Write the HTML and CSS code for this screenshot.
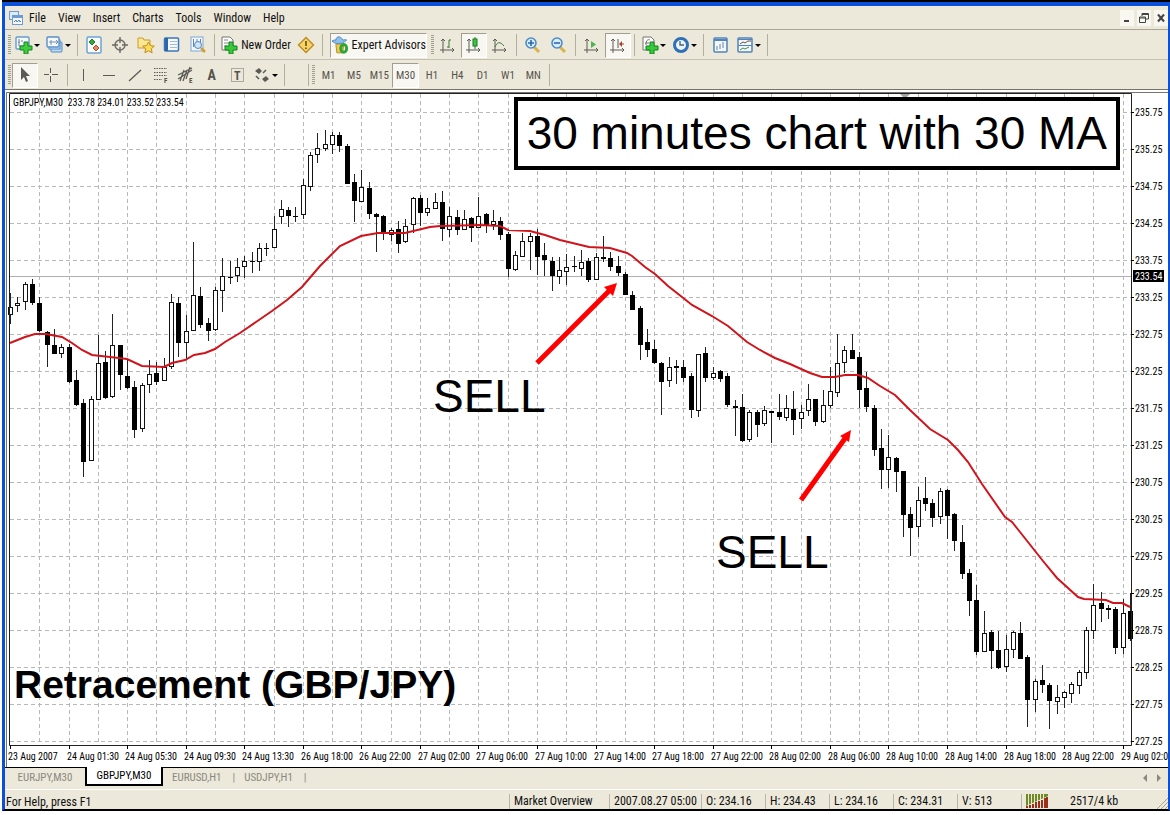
FILE: index.html
```
<!DOCTYPE html>
<html lang="en">
<head>
  <meta charset="UTF-8">
  <meta name="viewport" content="width=device-width, initial-scale=1.0">
  <title>GBPJPY,M30</title>
  <link rel="stylesheet" href="styles.css">
</head>
<body>
  <div class="window">
    <div class="titlebar"></div>

    <nav class="menu">
      <svg class="app-icon" width="14" height="14" viewBox="0 0 14 14">
        <rect x=".5" y=".5" width="9" height="8" fill="#dcebfa" stroke="#6f9bd0"/>
        <rect x="3.500" y="4.500" width="10" height="9" fill="#f4f9ff" stroke="#6f9bd0"/>
        <path d="M4 6h9" stroke="#6f9bd0" stroke-width="2"/>
        <path d="M5 11l2-2 1 2 2-2 1 2 1-1" fill="none" stroke="#4b7fc0"/>
      </svg>
      <button>File</button>
      <button>View</button>
      <button>Insert</button>
      <button>Charts</button>
      <button>Tools</button>
      <button>Window</button>
      <button>Help</button>
      <div class="window-buttons">
        <button aria-label="Minimize"><svg width="12" height="12" viewBox="0 0 12 12"><path d="M3 9h5" stroke="#444" stroke-width="2"/></svg></button>
        <button aria-label="Restore"><svg width="12" height="12" viewBox="0 0 12 12"><path d="M4 4V1.500h6.500V7H8M4 2.500h6M1.500 5h6v5.500h-6zM1.500 6h6" fill="none" stroke="#444"/></svg></button>
        <button aria-label="Close"><svg width="12" height="12" viewBox="0 0 12 12"><path d="M3 2.500l6 7M9 2.500l-6 7" stroke="#444" stroke-width="2"/></svg></button>
      </div>
    </nav>

    <div class="toolbar">
      <span class="grip"></span>
      <button class="tool split" aria-label="New chart">
        <svg width="18" height="18" viewBox="0 0 18 18"><rect x="1" y="1" width="13" height="12" rx="1" fill="#f3f9ff" stroke="#6a9ccc" stroke-width="1.400"/><path d="M4 3v7h8M3 6h2M7 4v2" stroke="#6a86a4" fill="none"/><path d="M9 6h4v4h4v4h-4v4H9v-4H5v-4h4z" fill="#3fce3f" stroke="#17811d"/></svg>
        <i class="arrow"></i>
      </button>
      <button class="tool split" aria-label="Profiles">
        <svg width="18" height="18" viewBox="0 0 18 18"><rect x="5" y="6" width="11" height="10" rx="1" fill="#bfdaf3" stroke="#4f8ac6"/><rect x="3" y="4" width="11" height="9" fill="#d8eafa" stroke="#4f8ac6"/><rect x="1" y="1" width="12" height="10" rx="1" fill="#f3f9ff" stroke="#5a90c8" stroke-width="1.400"/><path d="M3 6h9M5 4v5M10 4l2 2-2 2" stroke="#7590ac" fill="none"/></svg>
        <i class="arrow"></i>
      </button>
      <span class="sep"></span>
      <button class="tool" aria-label="Market watch"><svg width="18" height="18" viewBox="0 0 18 18"><rect x="2" y="1" width="14" height="16" rx="1.500" fill="#fbfdff" stroke="#6ba3d6" stroke-width="1.500"/><path d="M7 3l3 3-3 3-3-3z" fill="#36a83c" stroke="#247a2a"/><path d="M11 9l3 3-3 3-3-3z" fill="#e58a5c" stroke="#b8522c"/></svg></button>
      <button class="tool" aria-label="Data window"><svg width="18" height="18" viewBox="0 0 18 18" fill="none" stroke="#6b6a66" stroke-width="1.400"><circle cx="9" cy="9" r="5"/><path d="M9 1v6M9 11v6M1 9h6M11 9h6"/></svg></button>
      <button class="tool" aria-label="Navigator"><svg width="18" height="18" viewBox="0 0 18 18"><path d="M1 2h5l1 2h6v8H1z" fill="#fbe694" stroke="#c99b2e"/><path d="M11.500 6l1.800 3.600 4 .5-3 2.700.8 4-3.600-2-3.600 2 .8-4-3-2.700 4-.5z" fill="#fbdc57" stroke="#c28c1c"/></svg></button>
      <button class="tool" aria-label="Terminal"><svg width="18" height="18" viewBox="0 0 18 18"><rect x="1.500" y="2" width="14" height="13" rx="1" fill="#f6faff" stroke="#3b76bd" stroke-width="1.500"/><path d="M3.500 2v13" stroke="#2b66ae" stroke-width="3"/><path d="M7 5.500h7M7 8.500h7M7 11.500h7" stroke="#a3bad4"/></svg></button>
      <button class="tool" aria-label="Strategy tester"><svg width="18" height="18" viewBox="0 0 18 18"><rect x="2" y="1" width="12" height="14" fill="#f1f7fd" stroke="#7ea8d3"/><path d="M4.500 3v8M8 3v4M11.500 3v5" stroke="#5d85b6"/><circle cx="9" cy="9" r="3.500" fill="#cfe5f8" stroke="#5789bd"/><path d="M12 12l4 4" stroke="#cf9f35" stroke-width="2.500"/></svg></button>
      <span class="sep"></span>
      <button class="tool order">
        <svg width="18" height="18" viewBox="0 0 18 18"><path d="M2 1h8l3 3v10H2z" fill="#fff" stroke="#77756f"/><path d="M4 4h4M4 7h6M4 10h3" stroke="#8b8984"/><path d="M9 6h4v4h4v4h-4v4H9v-4H5v-4h4z" fill="#36ca3b" stroke="#158020"/></svg>
        New Order
      </button>
      <button class="tool" aria-label="MetaEditor"><svg width="18" height="18" viewBox="0 0 18 18"><path d="M9 1.500L16.500 9 9 16.500 1.500 9z" fill="#f6d568" stroke="#bd8c23" stroke-width="1.400"/><path d="M9 5v5M9 11.500v1.500" stroke="#6b4d13" stroke-width="1.600"/></svg></button>
      <span class="sep"></span>
      <button class="tool expert pressed">
        <svg width="18" height="18" viewBox="0 0 18 18"><path d="M5 8h8l-1 9H6z" fill="#f2c950" stroke="#b88b25"/><path d="M1 5c3 3 10 4 15-1-2-1-3 0-4 0C10-1 5 0 5 4 3 4 2 4 1 5z" fill="#8dc0ee" stroke="#4c86c3"/><ellipse cx="13" cy="12.500" rx="3" ry="4" fill="none" stroke="#2da635" stroke-width="3"/></svg>
        Expert Advisors
      </button>
      <span class="grip"></span>
      <button class="tool" aria-label="Bar chart"><svg class="axes" width="18" height="18" viewBox="0 0 18 18"><path d="M4 3v14M1 14h14M2 5l2-2 2 2M13 12l2 2-2 2"/><path d="M10 4v8M12 4h-2M8 11h2" stroke="#397a3d"/></svg></button>
      <button class="tool pressed" aria-label="Candlesticks"><svg class="axes" width="18" height="18" viewBox="0 0 18 18"><path d="M4 3v14M1 14h14M2 5l2-2 2 2M13 12l2 2-2 2"/><path d="M10 1v12" stroke="#23742a"/><rect x="8" y="3" width="4" height="7" fill="#38c647" stroke="#23742a"/></svg></button>
      <button class="tool" aria-label="Line chart"><svg class="axes" width="18" height="18" viewBox="0 0 18 18"><path d="M4 3v14M1 14h14M2 5l2-2 2 2M13 12l2 2-2 2"/><path d="M4 11c2-5 5-6 9-1" stroke="#397a3d"/></svg></button>
      <span class="sep"></span>
      <button class="tool" aria-label="Zoom in"><svg width="18" height="18" viewBox="0 0 18 18"><path d="M10 11l5 5" stroke="#d8b24b" stroke-width="3"/><circle cx="7" cy="7" r="5" fill="#d8ecfc" stroke="#4c8cca" stroke-width="1.600"/><path d="M4 7h6M7 4v6" stroke="#2c68ae" stroke-width="1.600"/></svg></button>
      <button class="tool" aria-label="Zoom out"><svg width="18" height="18" viewBox="0 0 18 18"><path d="M10 11l5 5" stroke="#d8b24b" stroke-width="3"/><circle cx="7" cy="7" r="5" fill="#d8ecfc" stroke="#4c8cca" stroke-width="1.600"/><path d="M4 7h6" stroke="#2c68ae" stroke-width="1.600"/></svg></button>
      <span class="sep"></span>
      <button class="tool" aria-label="Auto scroll"><svg class="axes" width="18" height="18" viewBox="0 0 18 18"><path d="M4 3v14M1 14h14M2 5l2-2 2 2M13 12l2 2-2 2"/><path d="M8 5l5 3.500L8 12z" fill="#48b651" stroke="none"/></svg></button>
      <button class="tool pressed" aria-label="Chart shift"><svg class="axes" width="18" height="18" viewBox="0 0 18 18"><path d="M4 3v14M1 14h14M2 5l2-2 2 2M13 12l2 2-2 2M9 3v9"/><path d="M15 8h-3" stroke="#a8402f"/><path d="M13 5v6l-3-3z" fill="#a8402f" stroke="none"/></svg></button>
      <span class="sep"></span>
      <button class="tool split" aria-label="Indicators">
        <svg width="18" height="18" viewBox="0 0 18 18"><path d="M2 1h8l3 3v10H2z" fill="#fff" stroke="#77756f"/><path d="M5 9c0-5 2-6 4-5M4 7h4" fill="none" stroke="#77756f"/><path d="M9 6h4v4h4v4h-4v4H9v-4H5v-4h4z" fill="#36ca3b" stroke="#158020"/></svg>
        <i class="arrow"></i>
      </button>
      <button class="tool split" aria-label="Periods">
        <svg width="18" height="18" viewBox="0 0 18 18"><circle cx="9" cy="9" r="6.500" fill="#e9f4fd" stroke="#2f6fb6" stroke-width="3"/><path d="M8 5v4h4" fill="none" stroke="#4a5f78" stroke-width="1.300"/></svg>
        <i class="arrow"></i>
      </button>
      <span class="sep"></span>
      <button class="tool" aria-label="Tile windows"><svg width="18" height="18" viewBox="0 0 18 18"><rect x="3" y="2" width="13" height="14" rx="1" fill="#f1f7fd" stroke="#5084b8" stroke-width="1.500"/><path d="M3 4h13" stroke="#5084b8" stroke-width="2"/><path d="M6 10v4M9 8v5M12 6v6" stroke="#6b83a0"/></svg></button>
      <button class="tool split" aria-label="Templates">
        <svg width="18" height="18" viewBox="0 0 18 18"><rect x="2" y="2" width="14" height="14" rx="1" fill="#f1f7fd" stroke="#5084b8" stroke-width="1.500"/><path d="M2 3.500h14M2 9.500h14" stroke="#5084b8"/><path d="M4 8l3-2 2 1 3-2h3" fill="none" stroke="#7a4d38"/><path d="M4 14l3-2 2 1 4-2" fill="none" stroke="#4a8a50"/></svg>
        <i class="arrow"></i>
      </button>
      <span class="sep"></span>
    </div>

    <div class="toolbar drawing">
      <span class="grip"></span>
      <button class="tool pressed" aria-label="Cursor"><svg width="18" height="18" viewBox="0 0 18 18"><path d="M5 1v13l3-3 2 5 2-1-2-5h4z" fill="#5b5a56"/></svg></button>
      <button class="tool" aria-label="Crosshair"><svg width="18" height="18" viewBox="0 0 18 18"><path d="M8.500 2v5M8.500 10v6M2 8.500h5M10 8.500h6" stroke="#5b5a56"/></svg></button>
      <span class="sep"></span>
      <div class="lines">
        <button class="tool" aria-label="Vertical line"><svg width="18" height="18" viewBox="0 0 18 18"><path d="M8.500 3v12" stroke="#5b5a56"/></svg></button>
        <button class="tool" aria-label="Horizontal line"><svg width="18" height="18" viewBox="0 0 18 18"><path d="M3 9.500h12" stroke="#5b5a56"/></svg></button>
        <button class="tool" aria-label="Trendline"><svg width="18" height="18" viewBox="0 0 18 18"><path d="M3 15L15 4" stroke="#5b5a56" stroke-width="1.300"/></svg></button>
        <button class="tool" aria-label="Fibonacci retracement"><svg width="18" height="20" viewBox="0 0 18 20"><path d="M2 3.500h13M2 7.500h13M2 10.500h13M2 14.500h8" stroke="#5b5a56" stroke-dasharray="1.500 1"/><text x="12" y="18" class="icon-letter">F</text></svg></button>
        <button class="tool" aria-label="Equidistant channel"><svg width="18" height="20" viewBox="0 0 18 20"><path d="M1 14L15 5M1 10L15 3M3 16L7 5M6 16l4-11M9 14l4-12" stroke="#5b5a56" stroke-width="1.300"/><text x="12" y="18" class="icon-letter">E</text></svg></button>
        <button class="tool letter">A</button>
        <button class="tool" aria-label="Text label"><svg width="18" height="18" viewBox="0 0 18 18"><rect x="3.500" y="2.500" width="12" height="13" fill="none" stroke="#6b6a66" stroke-dasharray="1 1"/><text x="6" y="14" class="icon-big">T</text></svg></button>
      </div>
      <button class="tool split" aria-label="Arrows">
        <svg width="18" height="18" viewBox="0 0 18 18"><path d="M6 2l3 3-3 3-4-3zM13 10l3 3-4 3-3-3z" fill="#5b5a56"/><path d="M3 10l3 3M10 7l3-3" stroke="#5b5a56" stroke-width="1.500"/></svg>
        <i class="arrow"></i>
      </button>
      <span class="sep"></span>
      <span class="sep gap"></span>
      <span class="grip"></span>
      <div class="periods">
        <button class="tool">M1</button>
        <button class="tool">M5</button>
        <button class="tool">M15</button>
        <button class="tool pressed">M30</button>
        <button class="tool">H1</button>
        <button class="tool">H4</button>
        <button class="tool">D1</button>
        <button class="tool">W1</button>
        <button class="tool">MN</button>
      </div>
      <span class="sep"></span>
    </div>

    <main class="chart">
      <svg id="plot" class="plot" viewBox="5 90 1163 677">
        <path class="frame" d="M6.500 767V92.500H1168"/>
        <g id="grid" class="grid"></g>
        <path class="bid" d="M10 276.500H1131"/>
        <path class="shift-mark" d="M900 94h10l-5 5z"/>
        <g id="candles" class="candles"></g>
        <polyline id="average" class="average"/>
        <path class="border" d="M9.500 745.500V93.500H1131.500V745.500Z"/>
        <g id="axis" class="axis"></g>
        <text class="quote" x="13" y="106">GBPJPY,M30&#160; 233.78 234.01 233.52 233.54</text>
        <rect x="1133" y="270" width="31" height="12"/>
        <text class="bid-label" x="1135" y="280">233.54</text>
        <g class="signal">
          <path d="M537 363L611 289"/>
          <path class="head" d="M617 283L613 296 604 287Z"/>
          <path d="M801 500L846 437"/>
          <path class="head" d="M851 430L849 442 840 436Z"/>
        </g>
        <text class="sell" x="433" y="412">SELL</text>
        <text class="sell" x="716" y="568">SELL</text>
        <text class="name" x="14" y="698">Retracement (GBP/JPY)</text>
      </svg>
      <h1 class="caption">30 minutes chart with 30 MA</h1>
    </main>

    <div class="tabs">
      <button class="tab">EURJPY,M30</button>
      <button class="tab active">GBPJPY,M30</button>
      <button class="tab">EURUSD,H1</button>
      <button class="tab">USDJPY,H1</button>
      <div class="tab-scroll">
        <button aria-label="Scroll left"><svg width="6" height="8" viewBox="0 0 6 8"><path d="M5 0v8L1 4z" fill="#8b897f"/></svg></button>
        <button aria-label="Scroll right"><svg width="6" height="8" viewBox="0 0 6 8"><path d="M1 0v8l4-4z" fill="#8b897f"/></svg></button>
      </div>
    </div>

    <footer class="status">
      <span class="help">For Help, press F1</span>
      <span class="cell overview">Market Overview</span>
      <span class="cell date">2007.08.27 05:00</span>
      <span class="cell">O: 234.16</span>
      <span class="cell">H: 234.43</span>
      <span class="cell">L: 234.16</span>
      <span class="cell">C: 234.31</span>
      <span class="cell">V: 513</span>
      <span class="cell traffic">
        <svg width="22" height="14" viewBox="0 0 22 14"><path d="M1 0v14M4 0v14M7 0v14M10 0v14M13 0v14M16 0v14M19 0v14M21 0v14" stroke="#6f8a22" stroke-width="2"/><path d="M0 12L22 2V14H0z" fill="#ece8da"/><path d="M1 14v-2M4 14v-3M7 14v-4M10 14V8M13 14V7M16 14V6M19 14V4M21 14V3" stroke="#9c2f1c" stroke-width="2"/></svg>
        2517/4 kb
      </span>
      <svg class="resize" width="12" height="12" viewBox="0 0 12 12"><path d="M1 12L12 1M5 12l7-7M9 12l3-3" stroke="#a9a596"/></svg>
    </footer>
  </div>

  <script>
    const LEFT = 10;
    const STEP = 7.32;
    const TOP_PRICE = 235.75;

    // high, low, body top, body bottom, 1 = falling candle
    const candles = [
      [293,324,307,315,0],[297,312,303,306,0],[282,310,284,302,0],[279,305,284,303,1],[297,332,303,331,1],
      [331,367,332,345,1],[329,354,345,354,1],[344,358,347,354,0],[344,383,347,382,1],[370,406,380,405,1],
      [399,477,403,462,1],[396,461,399,461,0],[335,400,363,400,0],[351,399,362,398,1],[314,398,345,397,0],
      [345,390,345,375,1],[360,389,376,388,1],[381,438,387,430,1],[383,432,385,429,0],[360,393,374,385,0],
      [362,385,373,382,1],[358,381,367,381,0],[294,369,302,367,0],[297,357,303,343,1],[315,359,331,343,0],
      [242,331,295,331,0],[287,328,296,325,1],[318,341,323,331,1],[287,331,290,330,0],[258,312,276,291,0],
      [261,284,277,278,1],[258,282,267,276,0],[256,278,261,267,0],[252,273,261,262,1],[243,271,248,262,0],
      [243,256,248,249,1],[216,248,229,248,0],[200,224,209,217,0],[207,227,210,216,1],[207,222,216,217,1],
      [179,219,185,215,0],[152,191,155,187,0],[133,163,148,155,0],[130,151,144,149,0],[132,154,135,145,0],
      [132,152,135,146,1],[144,184,146,184,1],[174,222,182,201,1],[170,202,187,202,0],[182,219,188,214,1],
      [213,252,214,217,1],[215,240,216,234,1],[228,241,230,235,0],[221,253,229,244,1],[219,243,226,242,0],
      [197,233,198,225,0],[195,226,198,213,1],[198,216,208,213,0],[193,209,202,209,0],[191,241,202,229,1],
      [207,237,216,230,0],[210,235,217,230,1],[210,230,219,230,0],[217,242,218,228,1],[197,228,216,228,0],
      [213,233,214,226,1],[210,230,221,225,0],[217,240,221,235,1],[232,277,234,269,1],[251,271,255,270,0],
      [233,257,241,257,0],[233,270,236,242,0],[229,275,236,257,1],[243,276,255,260,1],[257,291,261,276,1],
      [257,284,270,277,0],[254,285,267,272,0],[256,272,266,267,1],[250,276,262,269,0],[258,282,261,280,1],
      [253,280,257,280,0],[236,262,257,259,1],[252,271,258,267,1],[256,276,266,273,1],[272,295,274,295,1],
      [291,310,295,310,1],[306,360,308,345,1],[329,357,342,350,1],[340,364,349,363,1],[362,415,363,382,1],
      [357,387,367,381,0],[360,384,366,368,1],[360,382,367,378,1],[373,418,376,410,1],[354,417,354,411,0],
      [347,382,353,378,1],[367,380,373,378,0],[370,382,371,379,1],[373,407,376,405,1],[400,436,406,408,1],
      [394,442,407,441,1],[410,442,412,440,0],[410,437,412,425,1],[406,426,410,424,0],[411,443,411,413,1],
      [394,420,412,417,1],[395,421,408,418,0],[391,435,409,420,1],[405,429,412,419,0],[384,416,399,411,0],
      [399,426,399,422,1],[390,423,405,422,0],[367,408,391,406,0],[334,397,363,393,0],[346,373,350,363,0],
      [334,359,350,359,1],[352,408,357,390,1],[372,412,388,407,1],[405,456,408,450,1],[429,489,448,470,1],
      [435,488,457,470,0],[457,492,458,472,1],[471,537,471,515,1],[507,556,514,528,1],[487,537,500,527,0],
      [477,511,498,504,1],[499,527,503,518,1],[488,524,491,517,0],[489,539,490,516,1],[513,551,514,541,1],
      [525,579,542,574,1],[569,616,573,601,1],[585,655,600,652,1],[611,652,633,652,0],[630,669,632,651,1],
      [631,669,650,668,1],[635,672,649,667,0],[631,658,632,650,0],[622,659,633,659,1],[655,727,657,700,1],
      [679,712,681,700,0],[665,693,680,685,1],[683,729,685,701,1],[685,714,697,702,0],[691,708,692,698,0],
      [682,703,684,694,0],[670,694,672,686,0],[627,679,630,673,0],[584,639,605,631,0],[592,622,603,609,1],
      [605,619,608,610,1],[607,654,609,648,1],[599,654,613,648,0],[593,641,611,639,1]
    ];

    const average = [
      [10,343],[25,337],[35,334],[46,334],[62,337],[72,343],[82,350],[92,355],[110,357],[127,359],
      [142,366],[164,367],[172,363],[185,360],[194,355],[205,353],[215,349],[225,342],[240,333],[272,311],
      [287,300],[302,287],[320,266],[340,246],[361,236],[378,233],[405,233],[430,227],[440,226],[480,225],
      [500,226],[508,230],[530,231],[545,235],[560,240],[589,247],[610,248],[627,253],[632,256],[645,267],
      [655,274],[668,286],[682,297],[692,305],[712,316],[728,326],[747,342],[760,350],[775,358],[790,364],
      [810,373],[822,377],[835,377],[845,375],[858,375],[868,378],[880,386],[895,395],[910,410],[930,429],
      [948,440],[958,450],[968,462],[982,484],[1005,517],[1012,522],[1020,532],[1043,561],[1057,578],[1068,588],
      [1078,597],[1084,599],[1106,600],[1113,603],[1122,603],[1130,607]
    ];

    const times = [
      '23 Aug 2007', '24 Aug 01:30', '24 Aug 05:30', '24 Aug 09:30', '24 Aug 13:30',
      '26 Aug 18:00', '26 Aug 22:00', '27 Aug 02:00', '27 Aug 06:00', '27 Aug 10:00',
      '27 Aug 14:00', '27 Aug 18:00', '27 Aug 22:00', '28 Aug 02:00', '28 Aug 06:00',
      '28 Aug 10:00', '28 Aug 14:00', '28 Aug 18:00', '28 Aug 22:00', '29 Aug 02:0'
    ];

    let grid = '';
    let axis = '';

    for (let i = 0; i < 18; i++) {
      const y = 112 + i * 37;
      grid += `<path d="M10 ${y + 0.5}H1131"/>`;
      axis += `<path d="M1131 ${y + 0.5}h3"/>`;
      axis += `<text x="1135" y="${y + 4}">${(TOP_PRICE - i * 0.5).toFixed(2)}</text>`;
    }

    for (let i = 4; i < candles.length; i += 4) {
      const x = Math.round(LEFT + i * STEP) + 0.5;
      grid += `<path d="M${x} 94V745"/>`;
    }

    times.forEach((time, i) => {
      const x = Math.round(LEFT + i * 8 * STEP);
      axis += `<path d="M${x + 0.5} 745v4"/><text x="${x - 2}" y="760">${time}</text>`;
    });

    document.getElementById('grid').innerHTML = grid;
    document.getElementById('axis').innerHTML = axis;

    document.getElementById('candles').innerHTML = candles.map(([high, low, top, bottom, falling], i) => {
      const x = Math.round(LEFT + i * STEP);
      const body = falling
        ? `<rect x="${x - 2}" y="${top}" width="5" height="${bottom - top}"/>`
        : `<rect class="up" x="${x - 1.5}" y="${top + 0.5}" width="4" height="${bottom - top - 1}"/>`;
      return `<path d="M${x + 0.5} ${high}V${low}"/>${body}`;
    }).join('');

    document.getElementById('average').setAttribute('points', average.join(' '));
  </script>
</body>
</html>
```

FILE: styles.css
```
body {
  margin: 0;
  padding-left: 2px;
  background: white;
  color: #111;
  font-family: "Roboto Condensed", "Open Sans Condensed", "DejaVu Sans Condensed", sans-serif;
  font-size: 12px;
}
button {
  padding: 0;
  border: 0;
  background: none;
  color: inherit;
  font: inherit;
  white-space: nowrap;
}
.window {
  border-left: 3px solid #0b50d8;
  border-right: 2px solid #0b50d8;
  border-bottom: 2px solid black;
  background: #ece8da;
}
.titlebar {
  height: 4px;
  margin: 0 -2px 0 -3px;
  border-top: 2px solid black;
  background: #0b50d8;
}
.menu {
  display: flex;
  align-items: center;
  gap: 12px;
  height: 23px;
  padding-left: 4px;
  border-bottom: 1px solid #aaa697;
}
.app-icon {
  margin-right: -6px;
}
.window-buttons {
  display: flex;
  gap: 3px;
  margin-left: auto;
}
.window-buttons button {
  display: flex;
  align-items: center;
  justify-content: center;
  width: 14px;
  height: 16px;
  background: #f8f7f0;
}
.toolbar {
  display: flex;
  align-items: center;
  height: 28px;
  padding: 1px 0 0 3px;
  border-bottom: 1px solid #c5c1b2;
}
.drawing {
  border-bottom: 1px solid #77746a;
  color: #55534d;
}
.grip {
  width: 3px;
  height: 20px;
  margin-right: 1px;
  background: repeating-linear-gradient(#a29f92 0 1px, transparent 1px 2px);
}
.sep {
  width: 1px;
  height: 22px;
  margin: 0 3px;
  background: #b3afa0;
}
.gap {
  margin-left: 20px;
}
.tool {
  display: flex;
  align-items: center;
  justify-content: center;
  box-sizing: border-box;
  width: 26px;
  height: 25px;
}
.split {
  width: 31px;
}
.order {
  gap: 3px;
  width: 75px;
}
.expert {
  gap: 3px;
  width: 97px;
  margin: 0 4px;
}
.pressed {
  border: 1px solid #a29f92;
  border-right-color: white;
  border-bottom-color: white;
  background: #f8f7f1;
}
.arrow {
  border: 3px solid transparent;
  border-top-color: black;
  border-bottom: 0;
  margin-left: 1px;
}
.axes {
  fill: none;
  stroke: #5b5a56;
}
.lines {
  display: flex;
  width: 179px;
}
.periods {
  display: flex;
  width: 230px;
  font-size: 11px;
}
.lines .tool,
.periods .tool {
  flex: 1;
}
.letter {
  font-size: 14px;
  font-weight: bold;
}
.icon-letter {
  fill: #55534d;
  font-size: 7px;
  font-weight: bold;
}
.icon-big {
  fill: #55534d;
  font-size: 12px;
  font-weight: bold;
}
.chart {
  position: relative;
  background: white;
}
.plot {
  display: block;
  width: 100%;
  height: auto;
}
.frame {
  fill: none;
  stroke: #77746a;
}
.grid {
  stroke: #b8b8b8;
  stroke-dasharray: 4 3;
}
.bid {
  stroke: #b4acb8;
}
.shift-mark {
  fill: #a5a5a5;
}
.candles {
  fill: black;
  stroke: none;
}
.candles path {
  stroke: #222;
}
.candles .up {
  fill: white;
  stroke: #111;
}
.average {
  fill: none;
  stroke: #d0141c;
  stroke-width: 2;
}
.border {
  fill: none;
  stroke: #222;
}
.axis path {
  stroke: black;
}
.axis text,
.quote {
  font-size: 10px;
}
.bid-label {
  fill: white;
  font-size: 10px;
}
.signal path {
  stroke: red;
  stroke-width: 5;
}
.signal .head {
  fill: red;
  stroke: none;
}
.sell {
  font-family: "Liberation Sans", Arial, sans-serif;
  font-size: 46px;
}
.name {
  font-family: "Liberation Sans", Arial, sans-serif;
  font-size: 39px;
  font-weight: bold;
}
.caption {
  position: absolute;
  top: 7px;
  right: 48px;
  margin: 0;
  padding: 0 9px;
  border: 4px solid black;
  background: white;
  color: black;
  font-family: "Liberation Sans", Arial, sans-serif;
  font-size: 46px;
  font-weight: normal;
  line-height: 65px;
  white-space: nowrap;
}
.tabs {
  display: flex;
  height: 21px;
  border-top: 1px solid black;
  border-bottom: 1px solid white;
  color: #8b897f;
  font-size: 11px;
}
.tab {
  display: flex;
  align-items: center;
  justify-content: center;
  height: 19px;
  padding: 0 9px;
}
.tab:first-child {
  width: 80px;
}
.active {
  width: 78px;
  margin-top: -1px;
  border: 2px solid black;
  border-top: 0;
  background: white;
  color: black;
}
.active ~ .tab::after {
  content: "|";
  margin-left: 11px;
  margin-right: -9px;
}
.tab-scroll {
  display: flex;
  gap: 8px;
  margin-left: auto;
  padding-right: 6px;
}
.status {
  display: flex;
  align-items: center;
  height: 15px;
  padding-top: 4px;
}
.help {
  flex: 1;
  padding-left: 1px;
}
.cell {
  box-sizing: border-box;
  width: 64px;
  padding-left: 4px;
  border-left: 1px solid #bbb7a8;
  line-height: 15px;
  white-space: nowrap;
}
.overview {
  width: 100px;
}
.date {
  width: 92px;
}
.traffic {
  display: flex;
  gap: 22px;
  width: 135px;
}
.resize {
  align-self: flex-end;
}
```
